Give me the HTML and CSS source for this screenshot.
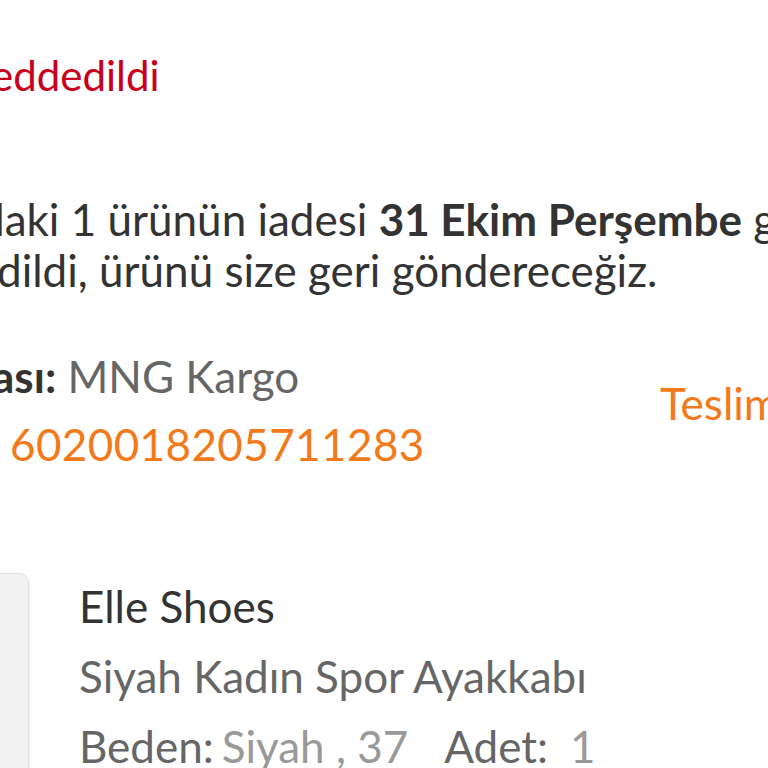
FILE: index.html
```html
<!DOCTYPE html>
<html>
<head>
    <link rel="stylesheet" href="styles.css">
</head>
<body>

    <div class="status">eddedildi</div>

    <div class="message">
        <div class="line line-one">daki 1 ürünün iadesi <b>31 Ekim Perşembe</b> günü reddedildi</div>
        <div class="line line-two">dildi, ürünü size geri göndereceğiz.</div>
    </div>

    <div class="cargo">
        <div class="cargo-info">
            <div class="cargo-name"><b>ası:</b> MNG Kargo</div>
            <div class="cargo-code">6020018205711283</div>
        </div>
        <div class="cargo-link">Teslimat Detayı</div>
    </div>

    <div class="product">
        <div class="thumb"></div>
        <div class="product-info">
            <div class="brand">Elle Shoes</div>
            <div class="name">Siyah Kadın Spor Ayakkabı</div>
            <div class="variant">
                <span class="label">Beden:</span><span class="value size">Siyah , 37</span><span class="label qty">Adet:</span><span class="value count">1</span>
            </div>
        </div>
    </div>

</body>
</html>
```

FILE: styles.css
```css
body {
    margin: 0;
    width: 768px;
    height: 768px;
    overflow: hidden;
    font-family: 'Lato', sans-serif;
    font-size: 44px;
    background-color: #fff;
    color: #333;
    white-space: nowrap;
}
.status {
    color: #c8001e;
    font-size: 42px;
    line-height: 53px;
    padding-top: 49px;
    text-indent: -9px;
}
.message {
    margin-top: 92px;
    line-height: 51px;
}
.message b {
    font-weight: 700;
}
.line-one {
    text-indent: -20px;
}
.line-two {
    text-indent: -3px;
}
.cargo {
    display: flex;
    margin-top: 46px;
}
.cargo-info {
    width: 660px;
    flex-shrink: 0;
    line-height: 68px;
}
.cargo-name {
    color: #666;
    text-indent: -8px;
}
.cargo-name b {
    color: #333;
    font-weight: 700;
}
.cargo-code {
    color: #f27a1a;
    padding-left: 10px;
    letter-spacing: 0.4px;
}
.cargo-link {
    color: #f27a1a;
    line-height: 53px;
    padding-top: 35px;
}
.product {
    display: flex;
    margin-top: 93px;
}
.thumb {
    width: 60px;
    height: 260px;
    margin-top: 2px;
    margin-left: -33px;
    background-color: #f1f1f1;
    border: 1px solid #e2e2e2;
    border-radius: 10px;
    box-shadow: 1px 1px 2px rgba(0, 0, 0, 0.06);
    flex-shrink: 0;
}
.product-info {
    padding-left: 50px;
    line-height: 70px;
}
.brand {
    color: #333;
}
.name {
    color: #666;
}
.variant .label {
    color: #666;
}
.variant .value {
    color: #999;
}
.variant .size {
    margin-left: 8px;
}
.variant .qty {
    margin-left: 36px;
}
.variant .count {
    margin-left: 22px;
}
```
